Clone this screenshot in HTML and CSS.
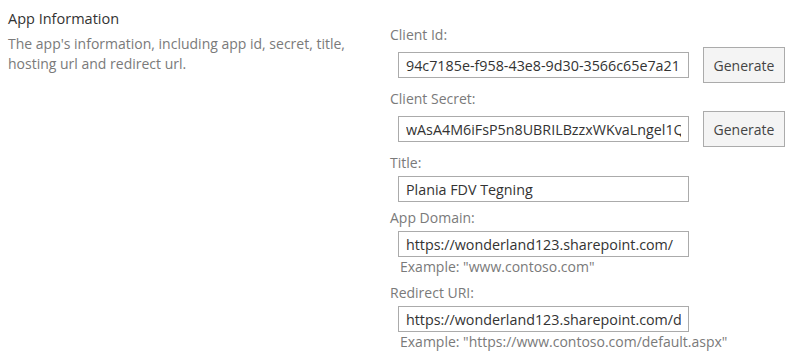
FILE: index.html
```html
<!DOCTYPE html>
<html lang="en">
<head>
    <meta charset="UTF-8">
    <meta name="viewport" content="width=device-width, initial-scale=1.0">
    <title>App Information</title>
    <link rel="stylesheet" href="styles.css">
</head>
<body>
    <div class="section">
        <div class="section-info">
            <h2>App Information</h2>
            <p>The app's information, including app id, secret, title, hosting url and redirect url.</p>
        </div>

        <div class="section-fields">
            <div class="field">
                <label class="field-label" for="clientId">Client Id:</label>
                <div class="field-row with-button">
                    <input type="text" id="clientId" value="94c7185e-f958-43e8-9d30-3566c65e7a21">
                    <button type="button">Generate</button>
                </div>
            </div>

            <div class="field">
                <label class="field-label" for="clientSecret">Client Secret:</label>
                <div class="field-row with-button">
                    <input type="text" id="clientSecret" value="wAsA4M6iFsP5n8UBRILBzzxWKvaLngel1Q9mT0kR=">
                    <button type="button">Generate</button>
                </div>
            </div>

            <div class="field">
                <label class="field-label" for="title">Title:</label>
                <div class="field-row">
                    <input type="text" id="title" value="Plania FDV Tegning">
                </div>
            </div>

            <div class="field">
                <label class="field-label" for="appDomain">App Domain:</label>
                <div class="field-row">
                    <input type="text" id="appDomain" value="https://wonderland123.sharepoint.com/">
                </div>
                <div class="field-hint">Example: "www.contoso.com"</div>
            </div>

            <div class="field">
                <label class="field-label" for="redirectUri">Redirect URI:</label>
                <div class="field-row">
                    <input type="text" id="redirectUri" value="https://wonderland123.sharepoint.com/default.aspx">
                </div>
                <div class="field-hint">Example: "https://www.contoso.com/default.aspx"</div>
            </div>
        </div>
    </div>
</body>
</html>
```

FILE: styles.css
```css
body {
    font-family: 'Segoe UI', 'Open Sans', sans-serif;
    background: #fff;
    margin: 0;
    color: #444;
}

.section {
    display: flex;
    padding-top: 8px;
}

.section-info {
    width: 390px;
    padding-left: 8px;
    box-sizing: border-box;
}

.section-info h2 {
    font-size: 14.5px;
    font-weight: normal;
    line-height: 22px;
    margin: 0 0 4px;
    color: #333;
}

.section-info p {
    font-size: 14px;
    line-height: 20px;
    margin: 0;
    color: #7a7a7a;
    width: 350px;
}

.section-fields {
    padding-top: 17px;
}

.field {
    margin-bottom: 6px;
}

.field-label {
    display: block;
    font-size: 14px;
    line-height: 20px;
    color: #7a7a7a;
}

.field-row {
    display: flex;
    align-items: center;
    gap: 14px;
    margin-top: 3px;
    padding-left: 8px;
}

.field-row.with-button {
    margin-top: 2px;
}

.field-row input {
    width: 291px;
    height: 26px;
    box-sizing: border-box;
    border: 1px solid #ababab;
    padding: 0 7px;
    font-family: inherit;
    font-size: 14.3px;
    color: #333;
    background: #fff;
    outline: none;
}

.field-row button {
    width: 82px;
    height: 36px;
    border: 1px solid #ababab;
    background: #f4f4f4;
    font-family: inherit;
    font-size: 14px;
    color: #444;
    padding: 0;
}

.field-hint {
    font-size: 14px;
    line-height: 20px;
    color: #7a7a7a;
    padding-left: 10px;
    margin-bottom: 1px;
}
```
